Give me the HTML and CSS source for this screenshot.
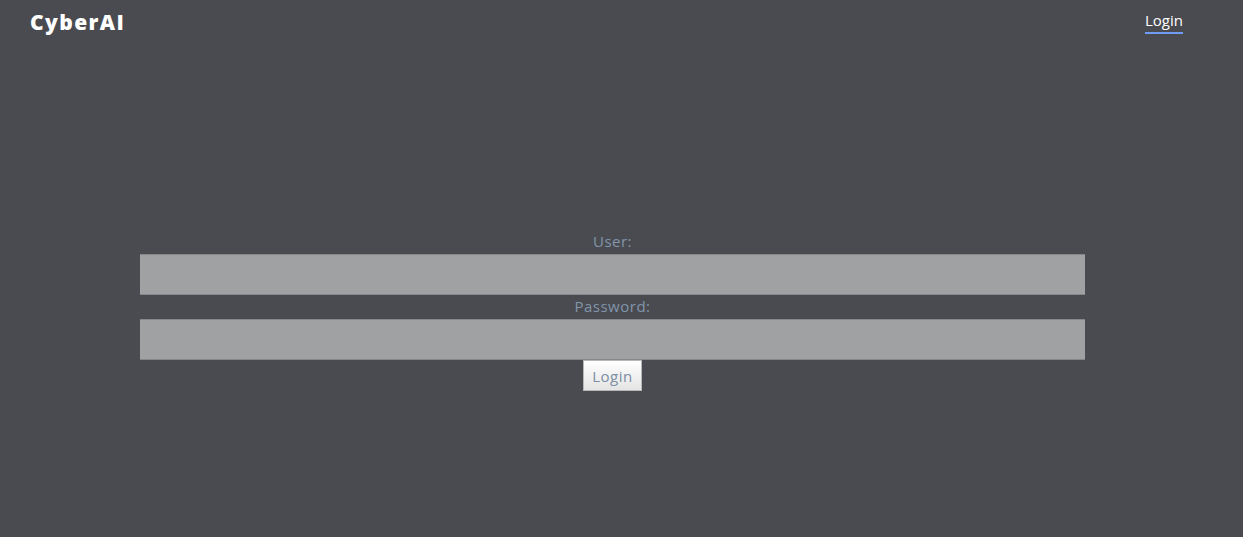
FILE: index.html
```html
<!DOCTYPE html>
<html>
<head>
<meta charset="utf-8">
<link rel="stylesheet" href="styles.css">
</head>
<body>
<header class="topbar">
  <div class="logo">CyberAI</div>
  <nav class="nav"><a class="nav-link" href="#">Login</a></nav>
</header>
<main class="main">
  <form class="login-form">
    <label class="label label-first" for="user">User:</label>
    <input class="field" id="user" type="text">
    <label class="label label-next" for="pass">Password:</label>
    <input class="field" id="pass" type="password">
    <button class="btn" type="button">Login</button>
  </form>
</main>
</body>
</html>
```
FILE: styles.css
```css
html, body {
  margin: 0;
  padding: 0;
  height: 100%;
}
body {
  background: #4a4b50;
  font-family: "Open Sans", sans-serif;
}
.topbar {
  display: flex;
  justify-content: space-between;
  align-items: flex-start;
  height: 40px;
  padding: 0 60px 0 30px;
}
.logo {
  color: #ffffff;
  font-family: "Open Sans", sans-serif;
  font-weight: 800;
  font-size: 21px;
  line-height: 20px;
  margin-top: 12px;
  letter-spacing: 1.4px;
}
.nav {
  margin-top: 11px;
}
.nav-link {
  display: block;
  color: #ffffff;
  text-decoration: none;
  font-size: 15px;
  line-height: 18px;
  padding-bottom: 3px;
  border-bottom: 2px solid #6e9cf0;
}
.main {
  padding-top: 191px;
}
.login-form {
  display: flex;
  flex-direction: column;
  align-items: center;
  width: 945px;
  margin-left: 140px;
}
.label {
  color: #8195ab;
  font-size: 15px;
  letter-spacing: 0.5px;
  line-height: 20px;
}
.label-first {
  margin-bottom: 3px;
}
.label-next {
  margin-top: 1px;
  margin-bottom: 3px;
}
.field {
  box-sizing: border-box;
  width: 100%;
  height: 41px;
  margin: 0;
  border: 0;
  border-top: 1px solid #86878a;
  border-bottom: 1px solid #86878a;
  background: #a0a1a3;
  outline: none;
}
.btn {
  box-sizing: border-box;
  height: 31px;
  width: 59px;
  padding: 0;
  border: 1px solid #b8b8b8;
  background: linear-gradient(#ffffff, #e4e4e4);
  color: #7b8ea3;
  font-family: "Open Sans", sans-serif;
  font-size: 15px;
  letter-spacing: 0.5px;
}
```
